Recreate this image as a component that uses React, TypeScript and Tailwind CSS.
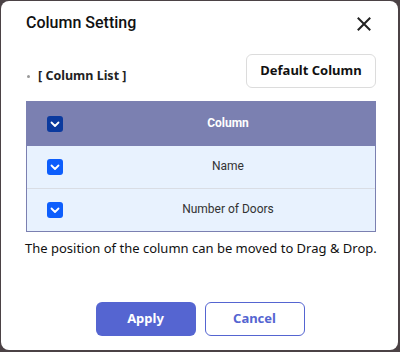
import React from "react";

function Check({ dark }: { dark?: boolean }) {
  return (
    <div
      className={`w-4 h-4 rounded-[3px] flex items-center justify-center ${dark ? "bg-[#0b3a9e]" : "bg-[#0d5efc]"}`}
    >
      <svg width="10" height="8" viewBox="0 0 10 8" fill="none">
        <path d="M1.5 2.5 L5 6 L8.5 2.5" stroke="white" strokeWidth="1.8" strokeLinecap="round" strokeLinejoin="round" />
      </svg>
    </div>
  );
}

export default function App() {
  return (
    <div className="w-[400px] h-[352px] bg-[#4b4245] pl-[1px] pt-[1px]">
      <div className="w-[397px] h-[349px] bg-white rounded-[8px] flex flex-col pl-[24px] pr-[22px]">
        <div className="flex items-center justify-between h-[42px] pt-[2px]">
          <div className="ml-[1px] text-[16px] font-medium text-[#111] font-['Roboto',sans-serif]">Column Setting</div>
          <svg width="14" height="14" viewBox="0 0 14 14" className="mr-[5px] mt-[1px]">
            <path d="M1.5 1.5 L12.5 12.5 M12.5 1.5 L1.5 12.5" stroke="#222" strokeWidth="2" strokeLinecap="square" />
          </svg>
        </div>
        <div className="flex items-center justify-between mt-[11px] h-[34px]">
          <div className="flex items-center font-['Noto_Sans',sans-serif] mt-[10px]">
            <span className="w-[3px] h-[3px] rounded-full bg-[#999] ml-[2px] mr-[8px]"></span>
            <span className="text-[12.5px] font-bold text-[#222]">[ Column List ]</span>
          </div>
          <button className="w-[130px] h-[34px] border border-[#dcdcdc] rounded-[6px] bg-white text-[13px] font-bold text-[#111] font-['Noto_Sans',sans-serif]">
            Default Column
          </button>
        </div>
        <div className="mt-[13px] ml-[1px] w-[350px] border border-[#7b80b1] border-t-0 font-['Roboto',sans-serif]">
          <div className="flex items-center h-[45px] bg-[#7b80b1]">
            <div className="w-[54px] flex justify-center pl-[2px]">
              <Check dark />
            </div>
            <div className="flex-1 text-center text-white text-[12px] font-bold -mt-[2px]">Column</div>
          </div>
          <div className="flex items-center h-[43px] bg-[#e8f2fe] border-b border-[#d9dde4]">
            <div className="w-[54px] flex justify-center pl-[2px]">
              <Check />
            </div>
            <div className="flex-1 text-center text-[#333] text-[12px] -mt-[2px]">Name</div>
          </div>
          <div className="flex items-center h-[42px] bg-[#e8f2fe]">
            <div className="w-[54px] flex justify-center pl-[2px]">
              <Check />
            </div>
            <div className="flex-1 text-center text-[#333] text-[12px] -mt-[2px]">Number of Doors</div>
          </div>
        </div>
        <div className="mt-[7px] text-[13px] text-[#111] font-['Noto_Sans',sans-serif] whitespace-nowrap">
          The position of the column can be moved to Drag &amp; Drop.
        </div>
        <div className="flex justify-center gap-[9px] mt-[43px] pr-[1px]">
          <button className="w-[100px] h-[34px] rounded-[6px] bg-[#5565d1] text-white text-[13px] font-bold font-['Noto_Sans',sans-serif]">
            Apply
          </button>
          <button className="w-[100px] h-[34px] rounded-[6px] border border-[#5565d1] bg-white text-[#5565d1] text-[13px] font-bold font-['Noto_Sans',sans-serif]">
            Cancel
          </button>
        </div>
      </div>
    </div>
  );
}
